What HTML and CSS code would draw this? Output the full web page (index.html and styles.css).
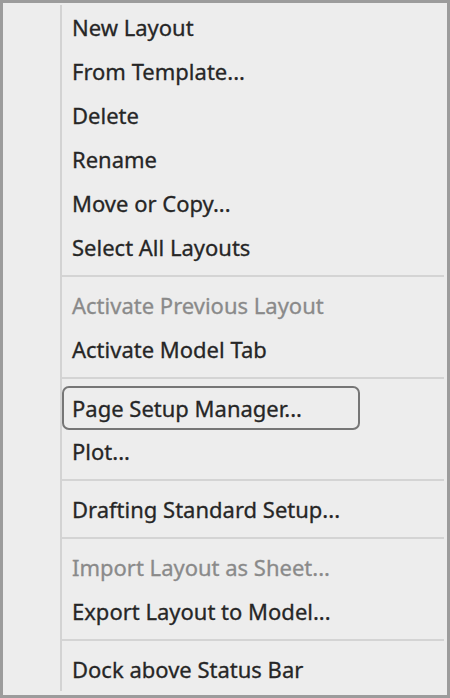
FILE: index.html
```html
<!DOCTYPE html>
<html lang="en">
<head>
    <meta charset="UTF-8">
    <meta name="viewport" content="width=device-width, initial-scale=1.0">
    <title>Layout Menu</title>
    <link rel="stylesheet" href="styles.css">
</head>
<body>
    <div class="context-menu">
        <ul class="menu-list">
            <li class="menu-item">New Layout</li>
            <li class="menu-item">From Template...</li>
            <li class="menu-item">Delete</li>
            <li class="menu-item">Rename</li>
            <li class="menu-item">Move or Copy...</li>
            <li class="menu-item">Select All Layouts</li>
            <li class="menu-separator"></li>
            <li class="menu-item disabled">Activate Previous Layout</li>
            <li class="menu-item">Activate Model Tab</li>
            <li class="menu-separator"></li>
            <li class="menu-item focused">Page Setup Manager...</li>
            <li class="menu-item">Plot...</li>
            <li class="menu-separator"></li>
            <li class="menu-item">Drafting Standard Setup...</li>
            <li class="menu-separator"></li>
            <li class="menu-item disabled">Import Layout as Sheet...</li>
            <li class="menu-item">Export Layout to Model...</li>
            <li class="menu-separator"></li>
            <li class="menu-item">Dock above Status Bar</li>
        </ul>
    </div>
</body>
</html>
```

FILE: styles.css
```css
* {
    margin: 0;
    padding: 0;
    box-sizing: border-box;
}

body {
    font-family: 'Noto Sans', 'Open Sans', sans-serif;
    background-color: #ececec;
}

/* 外框 */
.context-menu {
    width: 450px;
    height: 698px;
    border: 3px solid #9c9c9c;
    background-color: #ededed;
    padding: 2px 3px 4px 0;
}

/* 左侧图标栏的竖线 */
.menu-list {
    list-style: none;
    margin-left: 57px;
    border-left: 2px solid #d3d3d3;
    height: 100%;
}

.menu-item {
    height: 44px;
    line-height: 45px;
    padding-left: 10px;
    font-size: 22px;
    color: #262626;
    -webkit-text-stroke: 0.3px #262626;
    white-space: nowrap;
    cursor: default;
}

.menu-item.disabled {
    color: #8a8a8a;
    -webkit-text-stroke-color: #8a8a8a;
}

/* 当前键盘焦点项 */
.menu-item.focused {
    width: 298px;
    border: 2px solid #767676;
    border-radius: 7px;
    padding-left: 8px;
    line-height: 41px;
    position: relative;
    top: 1px;
}

.menu-separator {
    height: 14px;
    padding-top: 6px;
}

.menu-separator::before {
    content: '';
    display: block;
    height: 2px;
    background-color: #d4d4d4;
}
```
